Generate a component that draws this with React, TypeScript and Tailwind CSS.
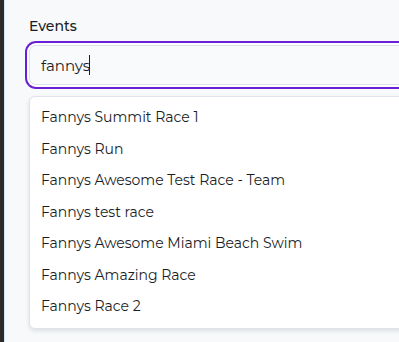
import { useState } from "react";

const events = [
  "Fannys Summit Race 1",
  "Fannys Run",
  "Fannys Awesome Test Race - Team",
  "Fannys test race",
  "Fannys Awesome Miami Beach Swim",
  "Fannys Amazing Race",
  "Fannys Race 2",
];

export default function App() {
  const [query, setQuery] = useState("fannys");

  return (
    <div
      className="flex h-[342px] w-[399px] overflow-hidden bg-[#f7f9fb]"
      style={{ fontFamily: "Montserrat, 'Noto Sans', sans-serif" }}
    >
      <div className="w-[4px] shrink-0 bg-[#2b2b2b]" />
      <div className="w-px shrink-0 bg-[#d6e4f0]" />

      <div className="min-w-0 flex-1 pl-[24px] pt-[16px]">
        <label className="block text-[14px] font-medium leading-5 text-[#1a1d26]">
          Events
        </label>

        <div className="relative mt-[9px] w-[420px]">
          <input
            value={query}
            onChange={(e) => setQuery(e.target.value)}
            className="h-[40px] w-full rounded-[7px] border border-[#dde2e8] bg-[#f8fafc] px-[11px] text-[15px] text-[#1a1d26] outline-none ring-2 ring-[#6a1fd6] ring-offset-2 ring-offset-white"
          />
          {/* caret */}
          <span className="pointer-events-none absolute left-[60px] top-[10px] h-[20px] w-px bg-[#1a1d26]" />
        </div>

        <ul className="mt-[11px] w-[420px] rounded-[6px] border border-[#dfe4ea] bg-white py-[5px] shadow-[0_2px_4px_rgba(30,40,60,0.12)]">
          {events.map((name) => (
            <li
              key={name}
              className="flex h-[31.5px] items-center px-[11px] text-[14px] text-[#1a1d26]"
            >
              {name}
            </li>
          ))}
        </ul>
      </div>
    </div>
  );
}
